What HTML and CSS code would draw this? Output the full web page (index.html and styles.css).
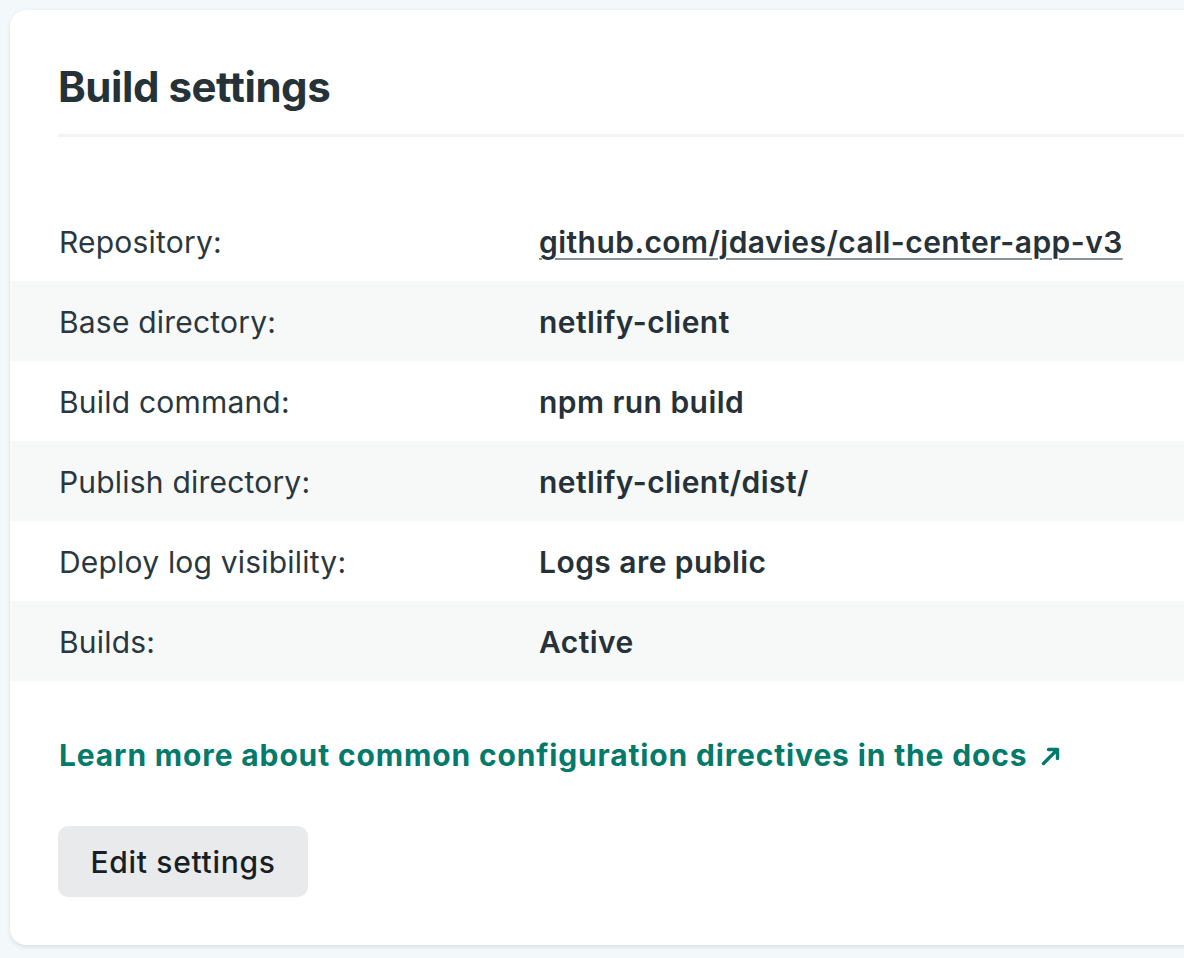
FILE: index.html
```html
<!DOCTYPE html>
<html lang="en">
<head>
<meta charset="utf-8">
<title>Build settings</title>
<link rel="stylesheet" href="styles.css">
</head>
<body>
<section class="card">
  <header class="card-header">
    <h2 class="card-title">Build settings</h2>
  </header>
  <dl class="settings">
    <div class="row">
      <dt class="label">Repository:</dt>
      <dd class="value"><a class="repo-link" href="#">github.com/jdavies/call-center-app-v3</a></dd>
    </div>
    <div class="row alt">
      <dt class="label">Base directory:</dt>
      <dd class="value">netlify-client</dd>
    </div>
    <div class="row">
      <dt class="label">Build command:</dt>
      <dd class="value">npm run build</dd>
    </div>
    <div class="row alt">
      <dt class="label">Publish directory:</dt>
      <dd class="value">netlify-client/dist/</dd>
    </div>
    <div class="row">
      <dt class="label">Deploy log visibility:</dt>
      <dd class="value">Logs are public</dd>
    </div>
    <div class="row alt">
      <dt class="label">Builds:</dt>
      <dd class="value">Active</dd>
    </div>
  </dl>
  <p class="docs">
    <a class="docs-link" href="#">Learn more about common configuration directives in the docs<svg class="ext-icon" viewBox="0 0 22 22" width="22" height="22" aria-hidden="true"><path d="M3.5 18.5 L17.5 4.5 M8.5 4.5 H17.5 V13.5" fill="none" stroke="currentColor" stroke-width="3.4" stroke-linecap="round" stroke-linejoin="round"/></svg></a>
  </p>
  <div class="actions">
    <button class="btn" type="button">Edit settings</button>
  </div>
</section>
</body>
</html>
```
FILE: styles.css
```css
html, body {
  margin: 0;
  padding: 0;
}
body {
  background: #f3f9fa;
  font-family: Inter, "Noto Sans", sans-serif;
  color: #263238;
  overflow: hidden;
  width: 1184px;
  height: 958px;
}
.card {
  margin: 10px 0 0 10px;
  width: 1220px;
  background: #ffffff;
  border-radius: 16px;
  box-shadow: 0 2px 4px rgba(40, 60, 70, 0.12), 0 0 1px rgba(40, 60, 70, 0.08);
  padding: 52px 0 48px 0;
}
.card-header {
  margin-left: 48px;
  padding-bottom: 22px;
  border-bottom: 3px solid #f2f4f4;
}
.card-title {
  margin: 0;
  font-size: 42px;
  line-height: 50px;
  font-weight: 700;
  color: #253238;
  letter-spacing: -0.45px;
}
.settings {
  margin: 64px 0 0 0;
  padding: 0;
}
.row {
  box-sizing: border-box;
  display: grid;
  grid-template-columns: 480px 1fr;
  align-items: center;
  height: 80px;
  padding: 2px 0 0 49px;
  font-size: 30px;
  line-height: 40px;
}
.row.alt {
  background: #f7f9f9;
}
.label {
  margin: 0;
  font-weight: 400;
  color: #2b373e;
  letter-spacing: 0.2px;
}
.value {
  margin: 0;
  font-weight: 600;
  color: #263238;
  letter-spacing: 0.45px;
}
.repo-link {
  color: #263238;
  text-decoration: underline;
  text-decoration-color: #8a9296;
  text-decoration-thickness: 2px;
  text-underline-offset: 5px;
}
.docs {
  margin: 54px 0 0 49px;
  font-size: 30px;
  line-height: 40px;
}
.docs-link {
  color: #047a6b;
  font-weight: 700;
  letter-spacing: 0.85px;
  text-decoration: none;
}
.ext-icon {
  margin-left: 13px;
  vertical-align: -1px;
}
.actions {
  margin: 51px 0 0 48px;
}
.btn {
  height: 71px;
  width: 250px;
  border: none;
  border-radius: 10px;
  background: #e9eaec;
  color: #181f24;
  font-family: Inter, "Noto Sans", sans-serif;
  font-size: 30px;
  font-weight: 500;
  letter-spacing: 0.7px;
  padding: 0;
  cursor: pointer;
}
```
